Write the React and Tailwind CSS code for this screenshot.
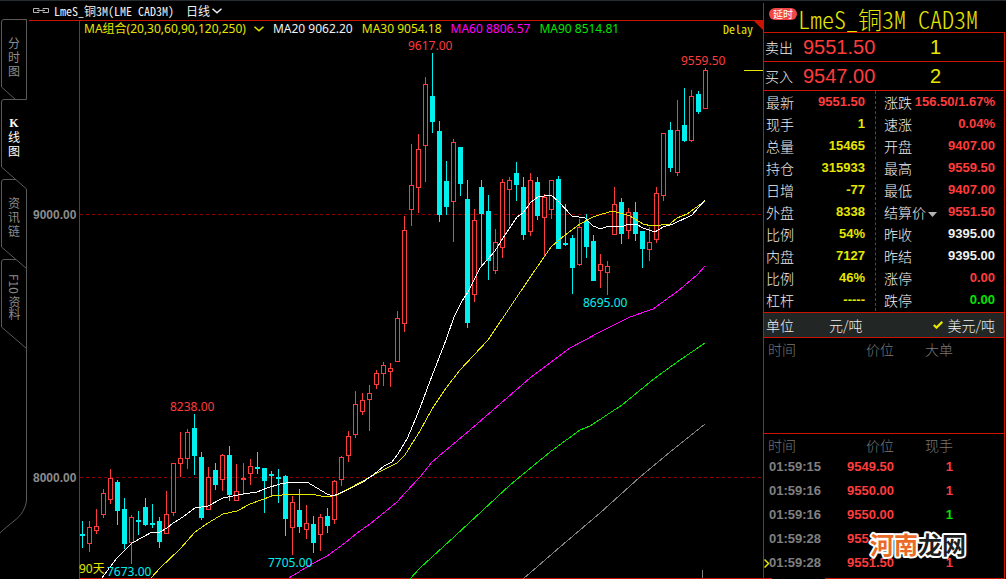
import React from "react";

const RED = "#ff3c3c";
const CYAN = "#00f0f0";

// Each candle: [direction, high, body top, body bottom, low] in chart units, 7 units apart.
const CANDLES = [
  ["d", 521, 534, 536, 548], ["u", 521, 527, 544, 552], ["u", 509, 526, 531, 534], ["u", 489, 493, 515, 518],
  ["u", 469, 478, 500, 504], ["d", 480, 482, 511, 525], ["d", 498, 509, 544, 549], ["u", 515, 517, 543, 564],
  ["d", 511, 520, 522, 535], ["d", 498, 507, 525, 526], ["d", 504, 523, 525, 528], ["d", 517, 521, 542, 548],
  ["u", 491, 514, 534, 534], ["u", 463, 463, 513, 516], ["u", 432, 458, 464, 477], ["u", 429, 432, 459, 469],
  ["d", 414, 428, 456, 475], ["d", 452, 457, 518, 520], ["u", 467, 477, 510, 510], ["d", 463, 470, 485, 490],
  ["u", 454, 455, 480, 491], ["d", 446, 455, 495, 501], ["u", 464, 491, 501, 501], ["u", 463, 478, 480, 495],
  ["u", 459, 466, 474, 485], ["d", 452, 467, 469, 474], ["d", 468, 468, 481, 513], ["d", 471, 474, 476, 497],
  ["d", 469, 477, 479, 503], ["d", 475, 476, 519, 536], ["u", 496, 502, 528, 555], ["d", 489, 510, 527, 533],
  ["u", 505, 523, 530, 539], ["d", 516, 524, 543, 553], ["u", 514, 517, 535, 551], ["d", 508, 516, 526, 533],
  ["u", 480, 481, 520, 524], ["u", 456, 457, 480, 486], ["u", 431, 436, 456, 462], ["u", 391, 404, 435, 438],
  ["u", 393, 400, 412, 415], ["u", 385, 393, 400, 431], ["u", 370, 373, 385, 389], ["u", 362, 365, 374, 386],
  ["u", 363, 368, 372, 387], ["u", 311, 318, 362, 362], ["u", 216, 230, 324, 332], ["u", 144, 185, 210, 226],
  ["u", 134, 149, 188, 213], ["u", 77, 84, 146, 182], ["d", 53, 96, 122, 133], ["d", 121, 131, 215, 222],
  ["d", 161, 181, 207, 215], ["u", 139, 142, 202, 242], ["d", 147, 147, 184, 196], ["d", 180, 199, 323, 328],
  ["u", 209, 220, 295, 302], ["d", 180, 187, 214, 266], ["d", 195, 211, 261, 280], ["u", 229, 242, 271, 274],
  ["u", 179, 182, 248, 258], ["u", 177, 180, 190, 226], ["d", 162, 173, 185, 201], ["d", 177, 187, 235, 240],
  ["u", 173, 180, 232, 236], ["d", 177, 182, 216, 220], ["u", 194, 197, 218, 257], ["u", 180, 180, 210, 219],
  ["d", 176, 179, 249, 249], ["d", 204, 243, 245, 246], ["d", 235, 238, 268, 294], ["u", 219, 227, 265, 266],
  ["d", 214, 221, 247, 258], ["d", 235, 241, 281, 281], ["u", 254, 264, 271, 288], ["u", 261, 266, 273, 295],
  ["u", 187, 204, 235, 235], ["d", 198, 202, 234, 244], ["u", 208, 212, 231, 239], ["d", 202, 212, 234, 241],
  ["d", 231, 231, 249, 268], ["u", 227, 242, 250, 261], ["u", 187, 193, 240, 243], ["u", 133, 133, 196, 201],
  ["d", 122, 130, 168, 172], ["u", 100, 130, 173, 176], ["d", 88, 125, 141, 142], ["u", 90, 96, 141, 142],
  ["d", 91, 94, 112, 114], ["u", 68, 70, 109, 109],
];

const AVERAGES = [
  { color: "#808080", points: "523,579 560,547 600,513 640,477 670,452 705,424" },
  { color: "#00e600", points: "410,579 420,568 455,536 510,485 550,452 580,430 590,426 622,405 655,378 680,360 705,343" },
  { color: "#ff00ff", points: "289,578 310,565 327,556 345,543 357,533 370,524 397,502 405,493 420,477 432,462 470,430 500,404 530,378 570,348 600,332 630,317 653,309 678,291 697,275 705,266" },
  { color: "#e6e600", points: "151,578 160,568 180,549 195,532 208,523 223,514 237,511 250,504 272,496 292,494 310,494 327,497 337,495 363,481 377,473 397,463 405,455 413,442 420,431 432,409 446,388 460,370 474,355 488,340 531,276 551,247 565,235 572,230 580,224 593,217 602,214 613,211 630,216 643,224 652,226 670,224 677,218 687,214 705,201" },
  { color: "#ffffff", points: "102,578 110,567 117,558 124,551 132,543 143,537 152,532 160,532 167,528 173,523 180,519 195,508 208,506 223,498 233,496 243,494 257,492 267,488 280,484 292,482 307,482 317,488 327,494 333,496 345,491 363,482 377,472 384,466 392,462 398,454 407,439 413,425 420,408 430,381 439,358 446,340 454,317 462,301 468,292 480,268 495,251 503,238 517,217 523,213 531,202 538,197 551,195 558,201 572,216 585,218 593,226 601,229 608,226 622,227 628,224 636,224 643,228 655,232 663,227 673,224 692,215 705,200" },
];

const PRICE_LABELS = [
  { x: 408, y: 50, text: "9617.00", color: RED },
  { x: 681, y: 65, text: "9559.50", color: RED },
  { x: 170, y: 411, text: "8238.00", color: RED },
  { x: 583, y: 307, text: "8695.00", color: CYAN },
  { x: 268, y: 567, text: "7705.00", color: CYAN },
  { x: 107, y: 576, text: "7673.00", color: CYAN },
  { x: 79, y: 573, text: "90天", color: "#e6e600" },
];

const LEGEND = [
  { text: "MA20 9062.20", color: "text-[#f0f0f0]" },
  { text: "MA30 9054.18", color: "text-[#e6e600]" },
  { text: "MA60 8806.57", color: "text-[#ff00ff]" },
  { text: "MA90 8514.81", color: "text-[#00e600]" },
];

const QUOTE_LEFT = [
  ["最新", "9551.50", "text-[#ff3c3c]"],
  ["现手", "1", "text-[#e6e600]"],
  ["总量", "15465", "text-[#e6e600]"],
  ["持仓", "315933", "text-[#e6e600]"],
  ["日增", "-77", "text-[#e6e600]"],
  ["外盘", "8338", "text-[#e6e600]"],
  ["比例", "54%", "text-[#e6e600]"],
  ["内盘", "7127", "text-[#e6e600]"],
  ["比例", "46%", "text-[#e6e600]"],
  ["杠杆", "-----", "text-[#e6e600]"],
];

const QUOTE_RIGHT = [
  ["涨跌", "156.50/1.67%", "text-[#ff3c3c]"],
  ["速涨", "0.04%", "text-[#ff3c3c]"],
  ["开盘", "9407.00", "text-[#ff3c3c]"],
  ["最高", "9559.50", "text-[#ff3c3c]"],
  ["最低", "9407.00", "text-[#ff3c3c]"],
  ["结算价", "9551.50", "text-[#ff3c3c]"],
  ["昨收", "9395.00", "text-[#f0f0f0]"],
  ["昨结", "9395.00", "text-[#f0f0f0]"],
  ["涨停", "0.00", "text-[#ff3c3c]"],
  ["跌停", "0.00", "text-[#00e600]"],
];

const TRADES = [
  ["01:59:15", "9549.50", "1", "text-[#ff3c3c]"],
  ["01:59:16", "9550.00", "1", "text-[#ff3c3c]"],
  ["01:59:16", "9550.00", "1", "text-[#00e600]"],
  ["01:59:28", "9551.50", "1", "text-[#ff3c3c]"],
  ["01:59:28", "9551.50", "1", "text-[#ff3c3c]"],
];

function Chevron() {
  return (
    <svg width="10" height="6" viewBox="0 0 10 6" fill="none" stroke="currentColor" strokeWidth="1.5" aria-hidden="true">
      <path d="M0.5 0.8 L5 4.8 L9.5 0.8" />
    </svg>
  );
}

function SideTabs() {
  const tab = "flex h-20 w-full items-center justify-center pb-1 text-xs";
  return (
    <nav className="relative w-7 shrink-0 pt-[18px] text-[#8c8c8c]">
      <svg className="pointer-events-none absolute left-0 top-0" width="28" height="540" viewBox="0 1 28 540" fill="none" stroke="#5a5a5a" aria-hidden="true">
        <path d="M26.5 19.5 H4 Q1.5 19.5 1.5 22 V87 L15.5 99.5" />
        <path d="M26.5 19.5 V99.5 H4 Q1.5 99.5 1.5 102 V167 L26.5 189" />
        <path d="M16 179.5 H4 Q1.5 179.5 1.5 182 V247 L26.5 268.5" />
        <path d="M16 259.5 H4 Q1.5 259.5 1.5 262 V327 L26.5 348.5" />
        <path d="M26.5 189 V500 C26 508 21 516 14 521 C9 525 4 529 0 533" />
      </svg>
      <button className={tab}><span className="w-3 leading-[14px]">分时图</span></button>
      <button className={tab + " text-white"}>
        <span className="w-3 leading-[14px]"><b className="block font-['Liberation_Serif',serif]">K</b>线图</span>
      </button>
      <button className={tab}><span className="w-3 leading-[14px]">资讯链</span></button>
      <button className={tab}><span className="leading-3 [writing-mode:vertical-rl]">F10 资料</span></button>
    </nav>
  );
}

function Candle({ candle, index }) {
  const [dir, high, top, bottom, low] = candle;
  const x = 82 + index * 7;
  const up = dir === "u";
  const color = up ? RED : CYAN;
  const hollow = up && bottom - top > 2;
  return (
    <g>
      <rect x={x} y={high} width="1" height={low - high} fill={color} />
      <rect x={x - 2} y={top} width="5" height={bottom - top} fill={color} />
      {hollow && <rect x={x - 1} y={top + 1} width="3" height={bottom - top - 2} fill="#000" />}
    </g>
  );
}

function Chart() {
  return (
    <svg className="block min-h-0 w-full flex-1" viewBox="28 38 735 541" preserveAspectRatio="xMinYMin meet" role="img" aria-label="K线图">
      <g shapeRendering="crispEdges">
        <path d="M79.5 38 V578.5 H763" fill="none" stroke="#c81400" />
        <path d="M80 214.5 H763 M80 477.5 H763" stroke="#8c0000" strokeDasharray="3 3" />
        <path d="M744 70.5 H763" stroke="#e6e600" />
        <path d="M702.5 570 V578" stroke="#808080" />
        {CANDLES.map((c, i) => <Candle key={i} candle={c} index={i} />)}
        {AVERAGES.map((a) => <polyline key={a.color} points={a.points} fill="none" stroke={a.color} />)}
      </g>
      <g className="text-xs font-bold" fill="#8c8c8c" fontFamily="'Liberation Sans', sans-serif">
        <text x="33" y="219">9000.00</text>
        <text x="33" y="482">8000.00</text>
      </g>
      <g className="text-xs" fontFamily="'Noto Sans', 'Noto Sans CJK SC', sans-serif">
        {PRICE_LABELS.map((l) => <text key={l.text} x={l.x} y={l.y} fill={l.color}>{l.text}</text>)}
      </g>
    </svg>
  );
}

function ChartPane() {
  return (
    <main className="flex min-w-0 flex-1 flex-col">
      <header className="flex h-[19px] items-center pl-[5px] text-xs text-[#f0f0f0]">
        <svg width="16" height="5" viewBox="0 0 16 5" fill="none" stroke="#b4b4b4" aria-hidden="true">
          <path d="M6 0.5 H0.5 V4.5 H6 V3.5 M6 0.5 V1.5 M10 0.5 H15.5 V4.5 H10 V3.5 M10 0.5 V1.5 M4 2.5 H12" />
        </svg>
        <h1 className="ml-[5px] [font-feature-settings:'hwid']">LmeS_铜3M(LME CAD3M)</h1>
        <button className="ml-3 flex items-center gap-0.5">日线 <Chevron /></button>
      </header>
      <div className="ml-px flex h-[18px] border-t border-[#c81400] pl-[50px]">
        <div className="flex flex-1 items-start gap-[9px] border-l border-[#c81400] pl-1 font-['Noto_Sans','Noto_Sans_CJK_SC',sans-serif] text-xs leading-4">
          <button className="flex items-center gap-2 whitespace-nowrap text-[#e6e600]">
            MA组合(20,30,60,90,120,250) <Chevron />
          </button>
          {LEGEND.map((l) => <span key={l.text} className={"whitespace-nowrap " + l.color}>{l.text}</span>)}
          <span className="ml-auto font-['Noto_Sans_CJK_SC',sans-serif] text-[#e6e600] [font-feature-settings:'hwid']">Delay</span>
          <svg className="-ml-2 self-start" width="9" height="9" viewBox="0 0 9 9" aria-hidden="true"><path d="M0 0 H9 V9 Z" fill="#c81400" /></svg>
        </div>
      </div>
      <Chart />
    </main>
  );
}

function BidAsk({ label, price, size }) {
  return (
    <div className="flex h-[29px] items-center border-b border-[#c81400] pl-px">
      <span className="w-[38px] text-sm font-light">{label}</span>
      <span className="w-[127px] font-['Liberation_Sans',sans-serif] text-xl text-[#ff3c3c]">{price}</span>
      <span className="font-['Liberation_Sans',sans-serif] text-xl text-[#e6e600]">{size}</span>
    </div>
  );
}

function QuoteList({ rows, className }) {
  return (
    <dl className={className}>
      {rows.map(([label, value, color]) => (
        <div key={label + value} className="flex h-[22px] items-center justify-between whitespace-nowrap">
          <dt className="text-sm font-light">
            {label === "结算价" ? (
              <button className="flex items-center gap-0.5">
                {label}
                <svg className="mt-1" width="9" height="5" viewBox="0 0 9 5" aria-hidden="true"><path d="M0 0 H9 L4.5 5 Z" fill="#b4b4b4" /></svg>
              </button>
            ) : label}
          </dt>
          <dd className={"font-['Liberation_Sans',sans-serif] text-[13px] font-bold " + color}>{value}</dd>
        </div>
      ))}
    </dl>
  );
}

function TradeTable({ lastColumn, rows }) {
  return (
    <table className="w-full table-fixed border-collapse">
      <thead>
        <tr className="h-[21px] text-sm leading-5 text-[#787878]">
          <th className="w-14 p-0 pl-1 text-left font-light">时间</th>
          <th className="w-[74px] p-0 text-right font-light">价位</th>
          <th className="w-[59px] p-0 text-right font-light">{lastColumn}</th>
          <th className="p-0" />
        </tr>
      </thead>
      <tbody className="font-['Liberation_Sans',sans-serif] text-[13px] font-bold">
        {rows.map(([time, price, size, color], i) => (
          <tr key={i} className="h-6 text-[#ff3c3c]">
            <td className="relative p-0 pl-[5px] text-[#808080]">
              {i === rows.length - 1 && (
                <svg className="absolute left-0 top-2" width="6" height="9" viewBox="0 0 6 9" fill="none" stroke="#e6e600" strokeWidth="1.5" aria-hidden="true"><path d="M0.5 0.5 L4.5 4.5 L0.5 8.5" /></svg>
              )}
              {time}
            </td>
            <td className="p-0 text-right">{price}</td>
            <td className={"p-0 text-right " + color}>{size}</td>
            <td className="p-0" />
          </tr>
        ))}
      </tbody>
    </table>
  );
}

function QuotePanel() {
  return (
    <aside className="mt-0.5 flex w-[243px] shrink-0 flex-col border-l border-[#c81400] text-[#f0f0f0]">
      <div className="flex h-[29px] gap-px pl-[5px]">
        <span className="mt-[5px] h-3 w-7 rounded-full bg-[#f04646] text-center text-[10px] leading-3 text-white">延时</span>
        <h2 className="whitespace-nowrap text-2xl font-light leading-8 text-[#e6e600] [font-feature-settings:'hwid']">LmeS_铜3M CAD3M</h2>
      </div>
      <div className="relative mr-px flex flex-1 flex-col border-r border-t border-[#c81400]">
        <BidAsk label="卖出" price="9551.50" size="1" />
        <BidAsk label="买入" price="9547.00" size="2" />
        <div className="flex pb-px">
          <QuoteList rows={QUOTE_LEFT} className="w-28 border-r border-dashed border-[#c81400] pl-0.5 pr-2.5" />
          <QuoteList rows={QUOTE_RIGHT} className="flex-1 pl-2 pr-[9px]" />
        </div>
        <div className="flex h-[26px] items-center border-y border-[#c81400] bg-[#222624] pl-0.5 pr-[9px] text-sm font-light">
          <span className="w-[63px]">单位</span>
          <span>元/吨</span>
          <span className="ml-auto flex items-center gap-1">
            <svg width="10" height="8" viewBox="0 0 10 8" fill="none" stroke="#e6e600" strokeWidth="2.2" aria-hidden="true"><path d="M0.8 4 L3.5 6.6 L9.3 0.8" /></svg>
            美元/吨
          </span>
        </div>
        <section className="h-24 border-b border-[#c81400]">
          <TradeTable lastColumn="大单" rows={[]} />
        </section>
        <section className="flex-1">
          <TradeTable lastColumn="现手" rows={TRADES} />
        </section>
        <div className="flex justify-between">
          <span className="w-2 border-b border-[#c81400]" />
          <span className="w-[179px] border-b border-[#c81400]" />
        </div>
        <svg className="absolute bottom-3 right-7" width="116" height="44" viewBox="0 0 116 44" role="img" aria-label="河南龙网">
          <g className="text-2xl font-bold" stroke="#fff" strokeWidth="4" strokeLinejoin="round" paintOrder="stroke">
            <text x="10" y="31" fill="#ea6a28">河南</text>
            <text x="58" y="31" fill="#1e1e1e">龙网</text>
          </g>
        </svg>
      </div>
    </aside>
  );
}

export default function App() {
  return (
    <div className="flex h-screen overflow-hidden border-t border-[#262b30] bg-black font-['Noto_Sans_CJK_SC',sans-serif]">
      <SideTabs />
      <ChartPane />
      <QuotePanel />
    </div>
  );
}
